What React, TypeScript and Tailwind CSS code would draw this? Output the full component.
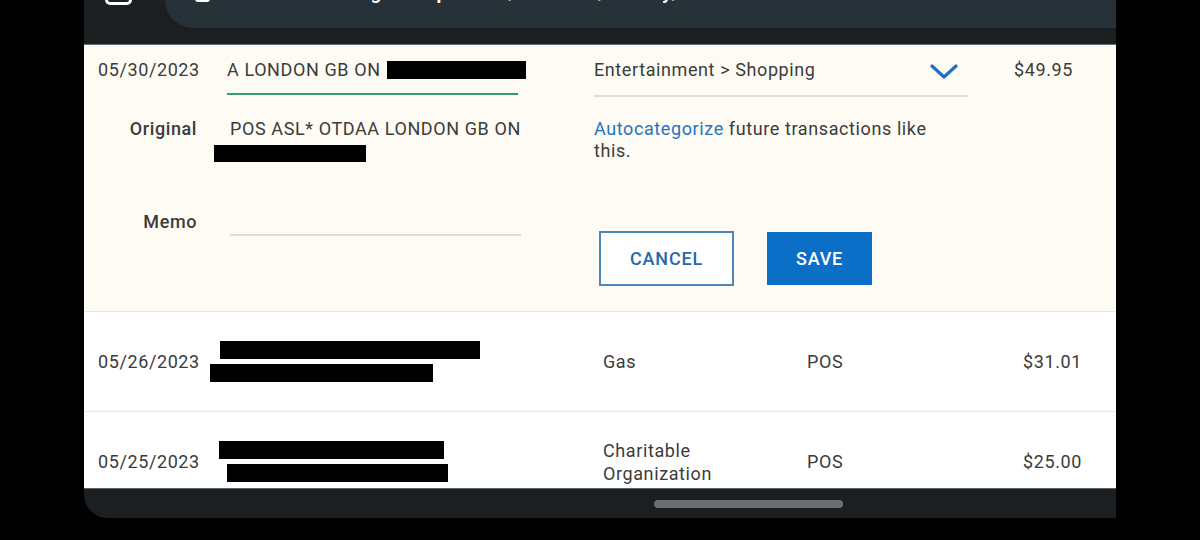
const font = { fontFamily: "Roboto, 'Noto Sans', sans-serif" };

const Redact = ({ w, ml = 0 }: { w: number; ml?: number }) => (
  <div className="h-[18px] bg-black" style={{ width: w, marginLeft: ml }} />
);

const rows = [
  {
    date: "05/26/2023",
    bars: [
      { w: 260, ml: 10 },
      { w: 223, ml: 0 },
    ],
    category: ["Gas"],
    type: "POS",
    amount: "$31.01",
  },
  {
    date: "05/25/2023",
    bars: [
      { w: 225, ml: 9 },
      { w: 221, ml: 17 },
    ],
    category: ["Charitable", "Organization"],
    type: "POS",
    amount: "$25.00",
  },
];

const App = () => {
  return (
    <div
      className="w-[1200px] h-[540px] bg-black flex justify-center overflow-hidden"
      style={font}
    >
      <div className="w-[1032px] h-[518px] flex flex-col bg-[#1b1f21] rounded-bl-[24px] overflow-hidden">
        {/* browser toolbar, mostly scrolled off the top */}
        <div className="h-[45px] flex items-start border-b border-[#6b6f72] shrink-0">
          <div className="ml-[21px] mt-[-22px] w-[27px] h-[27px] rounded-[5px] border-[3px] border-white" />
          <div className="ml-[33px] flex-1 h-[28px] bg-[#263238] rounded-bl-[28px] flex items-start overflow-hidden">
            <div className="ml-[30px] mt-[-14px] w-[15px] h-[16px] rounded-[3px] bg-white" />
            <div className="ml-[33px] mt-[-21px] text-white text-[19px] font-bold tracking-[0.5px] whitespace-nowrap">
              mobile.banking.example.com/accounts/activity/transactions?view=all
            </div>
          </div>
        </div>

        <div className="flex-1 overflow-hidden bg-white text-[18px] text-[#3b3b3b] tracking-[0.6px]">
          {/* expanded transaction */}
          <div className="h-[267px] bg-[#fdfbf3] border-b border-[#e3e3e3] flex flex-col">
            <div className="h-[73px] flex items-start pt-[13px]">
              <div className="w-[143px] pl-[14px] leading-[24px]">05/30/2023</div>
              <div className="w-[367px] flex flex-col">
                <div className="flex items-center leading-[24px]">
                  <span>A LONDON GB ON</span>
                  <div className="ml-[6px] w-[139px] h-[18px] bg-black" />
                </div>
                <div className="mt-[11px] w-[291px] h-[2px] bg-[#2f9d7a]" />
              </div>
              <div className="w-[374px] flex flex-col">
                <div className="flex items-center justify-between leading-[24px] pr-[10px]">
                  <span>Entertainment &gt; Shopping</span>
                  <svg width="28" height="16" viewBox="0 0 28 16" className="mt-[4px]">
                    <polyline
                      points="2,2 14,13 26,2"
                      fill="none"
                      stroke="#1f70be"
                      strokeWidth="3.2"
                      strokeLinecap="round"
                      strokeLinejoin="round"
                    />
                  </svg>
                </div>
                <div className="mt-[13px] h-[2px] bg-[#dedede]" />
              </div>
              <div className="ml-[46px] leading-[24px]">$49.95</div>
            </div>

            <div className="flex">
              <div className="w-[510px] flex flex-col">
                <div className="flex items-start">
                  <div className="w-[113px] text-right font-medium leading-[22px]">Original</div>
                  <div className="ml-[33px] flex flex-col">
                    <div className="leading-[22px]">POS ASL* OTDAA LONDON GB ON</div>
                    <div className="mt-[5px] ml-[-16px] w-[152px] h-[17px] bg-black" />
                  </div>
                </div>
                <div className="mt-[49px] flex items-start">
                  <div className="w-[113px] text-right font-medium leading-[22px]">Memo</div>
                  <div className="ml-[33px] w-[291px] h-[25px] border-b-2 border-[#dcdcdc]" />
                </div>
              </div>

              <div className="flex flex-col">
                <p className="w-[345px] leading-[22px]">
                  <span className="text-[#1f74c0]">Autocategorize</span> future transactions
                  like this.
                </p>
                <div className="mt-[69px] ml-[5px] flex items-start gap-[33px]">
                  <button className="w-[135px] h-[55px] border-2 border-[#4a87bd] bg-white text-[#2669a8] font-medium text-[18px] tracking-[0.8px]">
                    CANCEL
                  </button>
                  <button className="mt-[1px] w-[105px] h-[53px] bg-[#0b6fc8] text-white font-medium text-[18px] tracking-[0.8px]">
                    SAVE
                  </button>
                </div>
              </div>
            </div>
          </div>

          {rows.map((r) => (
            <div
              key={r.date}
              className="h-[100px] flex items-center border-b border-[#e6e6e6] shrink-0"
            >
              <div className="w-[126px] pl-[14px]">{r.date}</div>
              <div className="w-[393px] flex flex-col gap-[5px]">
                {r.bars.map((b, i) => (
                  <Redact key={i} w={b.w} ml={b.ml} />
                ))}
              </div>
              <div className="w-[204px] leading-[23px]">
                {r.category.map((c) => (
                  <div key={c}>{c}</div>
                ))}
              </div>
              <div className="w-[216px]">{r.type}</div>
              <div>{r.amount}</div>
            </div>
          ))}
        </div>

        {/* gesture bar */}
        <div className="h-[30px] shrink-0 border-t border-[#5f6366] bg-[#1b1f21] flex items-center">
          <div className="ml-[570px] w-[189px] h-[8px] rounded-full bg-[#6c6f71]" />
        </div>
      </div>
    </div>
  );
};

export default App;
